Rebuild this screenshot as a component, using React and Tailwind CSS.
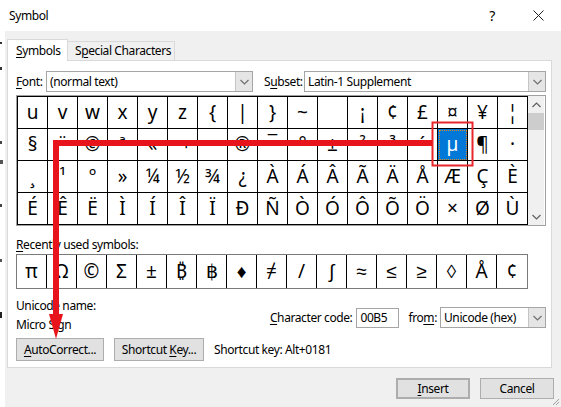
import React from "react";

// Windows "Symbol" dialog with a red annotation arrow

const rows = [
  ["u", "v", "w", "x", "y", "z", "{", "|", "}", "~", "", "¡", "¢", "£", "¤", "¥", "¦"],
  ["§", "¨", "©", "ª", "«", "¬", "-", "®", "¯", "°", "±", "²", "³", "´", "µ", "¶", "·"],
  ["¸", "¹", "º", "»", "¼", "½", "¾", "¿", "À", "Á", "Â", "Ã", "Ä", "Å", "Æ", "Ç", "È"],
  ["É", "Ê", "Ë", "Ì", "Í", "Î", "Ï", "Ð", "Ñ", "Ò", "Ó", "Ô", "Õ", "Ö", "×", "Ø", "Ù"],
];

const recent = ["π", "Ω", "©", "Σ", "±", "₿", "฿", "♦", "≠", "/", "∫", "≈", "≤", "≥", "◊", "Å", "¢"];

const Chevron = ({ up = false, color = "#606060" }) => (
  <svg width="9" height="6" viewBox="0 0 9 6">
    <polyline
      points={up ? "0.5,5 4.5,1 8.5,5" : "0.5,1 4.5,5 8.5,1"}
      fill="none"
      stroke={color}
      strokeWidth="1.2"
    />
  </svg>
);

const Select = ({ value, className }) => (
  <div className={`flex h-[21px] bg-white border border-[#a5a5a5] ${className}`}>
    <div className="flex-1 pl-[3px] flex items-center whitespace-nowrap">{value}</div>
    <div className="w-[17px] border-l border-[#c5c5c5] bg-[#e5e5e5] flex items-center justify-center">
      <Chevron color="#707070" />
    </div>
  </div>
);

const Key = ({ c }) => <span className="underline underline-offset-2">{c}</span>;

const Btn = ({ children, className }) => (
  <div className={`flex items-center justify-center whitespace-nowrap bg-[#e1e1e1] border border-[#adadad] ${className}`}>
    {children}
  </div>
);

const App = () => {
  return (
    <div className="relative w-[561px] h-[407px] overflow-hidden bg-[#f0f0f0] text-black text-[12px] tracking-[-0.4px] font-['Noto_Sans',sans-serif] flex flex-col">
      {/* title bar */}
      <div className="h-[31px] bg-white flex items-center shrink-0">
        <span className="ml-[9px] flex-1">Symbol</span>
        <div className="w-[46px] flex justify-center text-[14px]">?</div>
        <div className="w-[46px] flex justify-center">
          <svg width="11" height="11" viewBox="0 0 11 11">
            <path d="M0.5 0.5 L10.5 10.5 M10.5 0.5 L0.5 10.5" stroke="#222" strokeWidth="1" />
          </svg>
        </div>
      </div>

      <div className="flex flex-1">
        {/* sliver of the window behind */}
        <div className="w-[5px] bg-white flex flex-col">
          <div className="h-[11px]" />
          <div className="w-[2px] h-[2px] bg-[#333]" />
          <div className="h-[23px]" />
          <div className="w-[2px] h-[3px] bg-[#333]" />
          <div className="h-[71px]" />
          <div className="w-[2px] h-[3px] bg-[#444]" />
          <div className="h-[16px]" />
          <div className="w-[3px] h-[4px] bg-[#555]" />
          <div className="h-[40px]" />
          <div className="w-[2px] h-[3px] bg-[#444]" />
          <div className="h-[52px]" />
          <div className="w-[2px] h-[3px] bg-[#555]" />
          <div className="h-[50px]" />
          <div className="w-[2px] h-[6px] bg-[#222]" />
        </div>

        <div className="flex-1 pl-[2px] flex flex-col">
          {/* tabs */}
          <div className="flex items-end pt-[7px] h-[29px]">
            <div className="relative z-10 -mb-px h-[22px] w-[61px] bg-white border border-b-0 border-[#d9d9d9] pl-[8px] flex items-center whitespace-nowrap">
              <span>
                <Key c="S" />ymbols
              </span>
            </div>
            <div className="h-[19px] w-[107px] bg-[#f0f0f0] border border-l-0 border-b-0 border-[#d9d9d9] pl-[7px] flex items-center whitespace-nowrap">
              <span>
                S<Key c="p" />ecial Characters
              </span>
            </div>
          </div>

          {/* tab panel */}
          <div className="w-[545px] h-[308px] bg-white border border-[#d9d9d9] pl-[8px] pr-[5px] flex flex-col">
            <div className="flex items-center mt-[10px]">
              <span className="w-[30px]">
                <Key c="F" />ont:
              </span>
              <Select value="(normal text)" className="w-[207px]" />
              <span className="w-[40px] ml-[11px] whitespace-nowrap">
                S<Key c="u" />bset:
              </span>
              <Select value="Latin-1 Supplement" className="flex-1" />
            </div>

            {/* character grid */}
            <div className="mt-[3px] flex border border-[#a0a0a0] bg-white">
              <div className="grid grid-cols-[repeat(17,30px)] border-l border-t border-black text-[19px] tracking-normal">
                {rows.map((row, r) =>
                  row.map((ch, c) => {
                    const sel = r === 1 && c === 14;
                    return (
                      <div
                        key={`${r}-${c}`}
                        className={`h-[32px] border-r border-b border-black flex items-center justify-center leading-none ${
                          sel ? "bg-[#0078d7] text-white outline-1 outline-dotted outline-[#e08a20] -outline-offset-2" : ""
                        }`}
                      >
                        {ch}
                      </div>
                    );
                  })
                )}
              </div>
              <div className="w-[16px] bg-[#f0f0f0] flex flex-col">
                <div className="h-[17px] flex items-center justify-center">
                  <Chevron up />
                </div>
                <div className="h-[17px] bg-[#cdcdcd]" />
                <div className="flex-1" />
                <div className="h-[17px] flex items-center justify-center">
                  <Chevron />
                </div>
              </div>
            </div>

            <div className="mt-[11px] h-[16px] leading-[16px]">
              <Key c="R" />ecently used symbols:
            </div>
            <div className="mt-px w-[512px] flex border border-[#7a7a7a] text-[19px] tracking-normal">
              {recent.map((ch, i) => (
                <div
                  key={i}
                  className={`w-[30px] h-[33px] flex items-center justify-center leading-none ${
                    i < recent.length - 1 ? "border-r border-black" : ""
                  }`}
                >
                  {ch}
                </div>
              ))}
            </div>

            {/* unicode info */}
            <div className="flex items-start mt-[9px]">
              <div className="flex-1 flex flex-col gap-[3px] leading-[16px]">
                <span>Unicode name:</span>
                <span>Micro Sign</span>
              </div>
              <div className="flex items-center mt-[9px]">
                <span className="whitespace-nowrap">
                  <Key c="C" />haracter code:
                </span>
                <div className="ml-[4px] w-[43px] h-[20px] border border-[#a5a5a5] pl-[3px] flex items-center">00B5</div>
                <span className="ml-[9px]">
                  fro<Key c="m" />:
                </span>
                <Select value="Unicode (hex)" className="ml-[3px] w-[106px]" />
              </div>
            </div>

            <div className="flex items-center mt-[5px]">
              <Btn className="w-[88px] h-[23px]">
                <span>
                  <Key c="A" />utoCorrect...
                </span>
              </Btn>
              <Btn className="ml-[10px] w-[90px] h-[23px]">
                <span>
                  Shortcut <Key c="K" />ey...
                </span>
              </Btn>
              <span className="ml-[10px] whitespace-nowrap">Shortcut key: Alt+0181</span>
            </div>
          </div>

          {/* dialog buttons */}
          <div className="flex justify-end mt-[10px] w-[547px]">
            <Btn className="w-[74px] h-[21px] border-2 border-[#0078d7]">
              <span>
                <Key c="I" />nsert
              </span>
            </Btn>
            <Btn className="ml-[10px] w-[74px] h-[21px]">Cancel</Btn>
          </div>
        </div>
      </div>

      {/* resize grip */}
      <svg className="absolute right-[1px] bottom-[1px]" width="9" height="9" viewBox="0 0 9 9">
        <path d="M8 2 L2 8 M8 5 L5 8" stroke="#a0a0a0" strokeWidth="1" />
      </svg>

      {/* red annotation */}
      <svg className="absolute inset-0 pointer-events-none" width="561" height="407" viewBox="0 0 561 407">
        <rect x="432.5" y="122.5" width="40" height="43" fill="none" stroke="#e8262c" strokeWidth="2" />
        <path d="M432 143 L56 143 L56 316" fill="none" stroke="#e8141c" strokeWidth="6" />
        <polygon points="49,314 63,314 56,339" fill="#e8141c" />
      </svg>
    </div>
  );
};

export default App;
